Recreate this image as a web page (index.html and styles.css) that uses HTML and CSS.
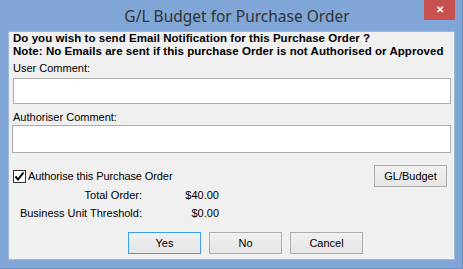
FILE: index.html
```html
<!DOCTYPE html>
<html lang="en">
<head>
    <meta charset="UTF-8">
    <title>G/L Budget for Purchase Order</title>
    <link rel="stylesheet" href="styles.css">
</head>
<body>
    <div class="window">
        <div class="titlebar">
            <span class="title">G/L Budget for Purchase Order</span>
            <div class="close">&#x2715;</div>
        </div>

        <div class="client">
            <p class="notice">Do you wish to send Email Notification for this Purchase Order ?</p>
            <p class="notice">Note: No Emails are sent if this purchase Order is not Authorised or Approved</p>

            <label class="field-label" for="userComment">User Comment:</label>
            <input class="textbox" id="userComment" type="text">

            <label class="field-label second" for="authComment">Authoriser Comment:</label>
            <input class="textbox tall" id="authComment" type="text">

            <div class="auth-row">
                <label class="check">
                    <span class="box">
                        <svg width="11" height="11" viewBox="0 0 11 11">
                            <path d="M1.5 5.5 L4 8.5 L9.5 1.5" fill="none" stroke="#000" stroke-width="2"/>
                        </svg>
                    </span>
                    Authorise this Purchase Order
                </label>
                <button class="btn gl">GL/Budget</button>
            </div>

            <div class="totals">
                <span class="t-label">Total Order:</span>
                <span class="t-value">$40.00</span>
                <span class="t-label">Business Unit Threshold:</span>
                <span class="t-value">$0.00</span>
            </div>

            <div class="actions">
                <button class="btn default">Yes</button>
                <button class="btn">No</button>
                <button class="btn">Cancel</button>
            </div>
        </div>
    </div>
</body>
</html>
```

FILE: styles.css
```css
body, html {
    margin: 0;
    padding: 0;
    width: 463px;
    height: 269px;
    overflow: hidden;
    font-family: 'Liberation Sans', Arial, sans-serif;
    font-size: 11px;
    color: #000;
}

.window {
    width: 463px;
    height: 269px;
    box-sizing: border-box;
    background: #7fa6d6;
    border-right: 1px solid #6a8fbd;
    border-bottom: 1px solid #6a8fbd;
    display: flex;
    flex-direction: column;
}

.titlebar {
    height: 31px;
    position: relative;
    display: flex;
    align-items: center;
    justify-content: center;
    padding-left: 12px;
    padding-bottom: 0;
    box-sizing: border-box;
}

.title {
    font-family: 'Noto Sans', sans-serif;
    font-size: 15.5px;
    line-height: 20px;
    color: #333;
}

.close {
    position: absolute;
    top: 0;
    right: 7px;
    width: 31px;
    height: 20px;
    background: #c75050;
    color: #fff;
    font-size: 10px;
    font-weight: bold;
    line-height: 20px;
    text-align: center;
}

.client {
    margin: 0 7px 8px 8px;
    flex: 1;
    background: #f0f0f0;
    border: 1px solid #9fb8d8;
    padding: 0 3px 0 4px;
    display: flex;
    flex-direction: column;
}

.notice {
    margin: 0;
    font-size: 11.5px;
    font-weight: bold;
    line-height: 13px;
    letter-spacing: 0.05px;
    white-space: nowrap;
}

.field-label {
    line-height: 12px;
    margin-top: 4px;
}

.field-label.second {
    margin-top: 7px;
}

.textbox {
    margin: 4px 0 0 0;
    height: 26px;
    box-sizing: border-box;
    border: 1px solid #acacac;
    background: #fff;
    padding: 0;
}

.textbox.tall {
    margin-top: 2px;
    margin-left: -1px;
    height: 28px;
}

.auth-row {
    margin-top: 12px;
    display: flex;
    align-items: center;
    justify-content: space-between;
    padding-right: 4px;
}

.check {
    display: flex;
    align-items: center;
    gap: 2px;
    line-height: 12px;
    letter-spacing: -0.1px;
}

.box {
    width: 13px;
    height: 13px;
    box-sizing: border-box;
    border: 1px solid #333;
    background: #fff;
    display: flex;
    align-items: center;
    justify-content: center;
}

.btn {
    width: 73px;
    height: 22px;
    font-family: 'Liberation Sans', Arial, sans-serif;
    font-size: 11px;
    color: #000;
    border: 1px solid #acacac;
    background: linear-gradient(#f0f0f0, #e5e5e5);
    padding: 0;
}

.btn.default {
    border-color: #3c9cf0;
}

.totals {
    margin-top: 2px;
    display: grid;
    grid-template-columns: 129px 77px;
    row-gap: 6px;
    line-height: 12px;
}

.t-label,
.t-value {
    text-align: right;
}

.actions {
    margin-top: 13px;
    margin-left: 115px;
    display: flex;
    gap: 8px;
}
```
